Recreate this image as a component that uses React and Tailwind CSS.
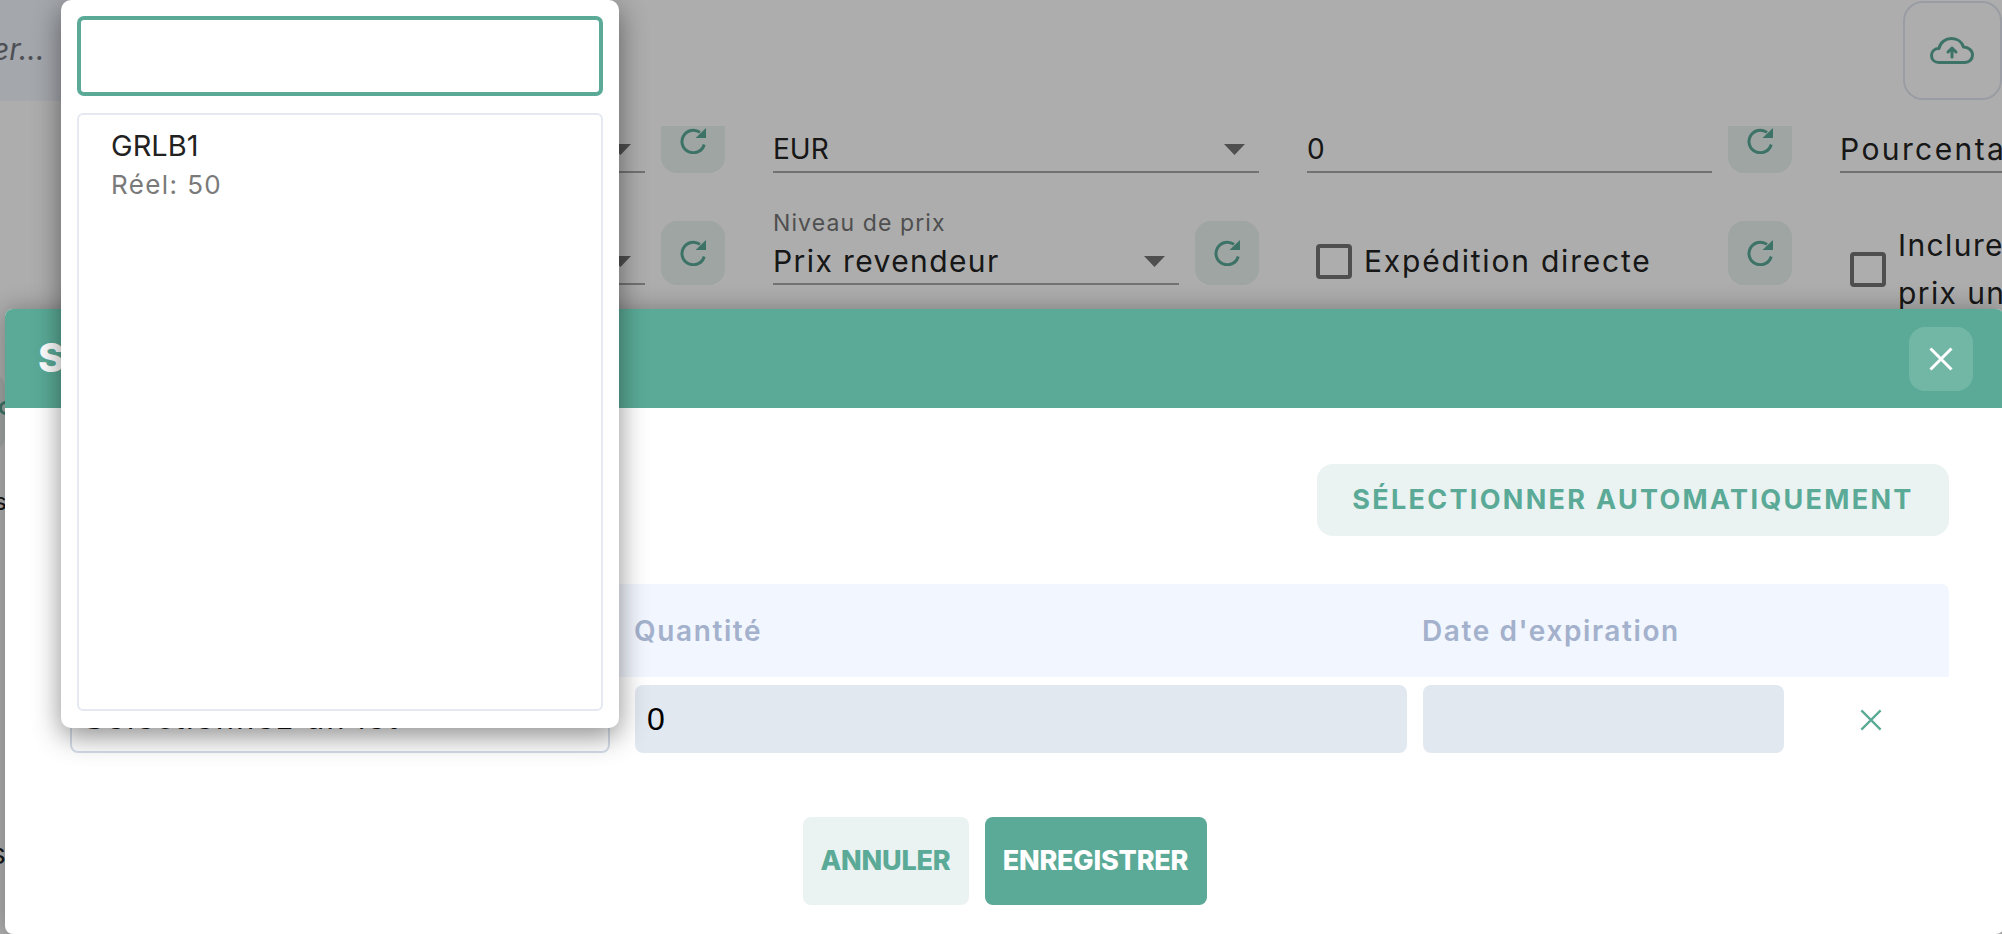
import React from "react";

const Refresh = () => (
  <button className="flex h-[64px] w-[64px] shrink-0 items-start justify-center rounded-2xl bg-[#eaf3f1] pt-[18px]">
    <svg width="27" height="27" viewBox="0 0 27 27" fill="none">
      <path d="M20 5.4A11.3 11.3 0 1 0 24.2 17.5" stroke="#5aaa97" strokeWidth="3" />
      <polygon points="26,1 26,11 15.5,11" fill="#5aaa97" />
    </svg>
  </button>
);

const Arrow = () => (
  <svg width="21" height="11" viewBox="0 0 21 11" className="shrink-0">
    <polygon points="0,0 21,0 10.5,11" fill="#757575" />
  </svg>
);

const Select = ({ text, width, textClass }) => (
  <div className={`flex h-[46px] shrink-0 items-center justify-between border-b-2 border-[#a8a8a8] pr-[14px] text-[#222] ${width}`}>
    <span className={`whitespace-nowrap ${textClass}`}>{text}</span>
    <Arrow />
  </div>
);

const Checkbox = () => (
  <span className="block h-[35px] w-[36px] shrink-0 rounded-[4px] border-[4px] border-[#757575]" />
);

const Close = ({ size, color, stroke }) => (
  <svg width={size} height={size} viewBox="0 0 24 24" fill="none">
    <path d="M1.5 1.5L22.5 22.5M22.5 1.5L1.5 22.5" stroke={color} strokeWidth={stroke} />
  </svg>
);

export default function App() {
  return (
    <div className="relative h-[934px] w-[2002px] overflow-hidden bg-white font-['Inter',sans-serif]">
      {/* page under the dialog */}
      <div className="flex h-[101px] items-start justify-between">
        <div className="flex h-[101px] w-[400px] items-center rounded-r-lg bg-[#f2f6fe] pb-[2px] text-[30px] text-[#74777f] italic">
          <span className="ml-[-8px]">er...</span>
        </div>
        <button className="mt-[1px] flex h-[99px] w-[99px] items-center justify-center rounded-[20px] border-2 border-[#e2e8f0] pr-[2px]">
          <svg width="44" height="27" viewBox="0 0 44 27" fill="none" stroke="#5aaa97" strokeWidth="3" strokeLinejoin="round" strokeLinecap="round">
            <path d="M9 25.5C4.5 25.5 1.5 22.5 1.5 18.5C1.5 14.5 4.5 11.5 9 11.5C10 5.5 15.5 1.5 21.5 1.5C27.5 1.5 32 5 33.5 10C38.5 10 42.5 13.5 42.5 18C42.5 22.5 39 25.5 35 25.5Z" />
            <path d="M22 20V11M18 15L22 11L26 15" />
          </svg>
        </button>
      </div>

      <div className="mt-[25px] flex h-[47px] items-end overflow-hidden">
        <div className="ml-[300px]"><Select text="" width="w-[345px]" textClass="" /></div>
        <div className="ml-4"><Refresh /></div>
        <div className="ml-[48px]"><Select text="EUR" width="w-[486px]" textClass="text-[28px]" /></div>
        <div className="ml-[48px] flex h-[46px] w-[405px] shrink-0 items-center border-b-2 border-[#a8a8a8] text-[28px] text-[#222]">0</div>
        <div className="ml-4"><Refresh /></div>
        <div className="ml-[48px]"><Select text="Pourcentage" width="w-[300px]" textClass="text-[30px] tracking-[2.4px]" /></div>
      </div>

      <div className="mt-[48px] flex h-[64px] items-end">
        <div className="ml-[300px]"><Select text="" width="w-[345px]" textClass="" /></div>
        <div className="ml-4"><Refresh /></div>
        <div className="ml-[48px] flex h-[64px] w-[406px] shrink-0 flex-col justify-end">
          <span className="mb-[6px] shrink-0 text-[23px] leading-[20px] tracking-[1.1px] text-[#757575]">Niveau de prix</span>
          <div className="shrink-0"><Select text="Prix revendeur" width="w-[406px]" textClass="text-[30px] tracking-[1.4px]" /></div>
        </div>
        <div className="ml-4"><Refresh /></div>
        <label className="ml-[57px] flex h-[46px] w-[396px] shrink-0 items-center gap-[12px] pb-[2px] text-[30px] tracking-[1.8px] text-[#222]">
          <Checkbox />
          Expédition directe
        </label>
        <div className="ml-4"><Refresh /></div>
        <label className="ml-[58px] flex h-[96px] shrink-0 items-center gap-[12px] self-start text-[30px] leading-[48px] tracking-[1.4px] text-[#222]">
          <Checkbox />
          <span className="w-[300px]">Inclure les<br />prix unitaires</span>
        </label>
      </div>

      {/* slivers of the page left of the dialog */}
      <div className="absolute top-[372px] left-0 h-[80px] w-[5px] overflow-hidden">
        <div className="relative left-[-59px]">
          <div className="flex h-[80px] w-[64px] items-center justify-end rounded-2xl bg-[#eaf3f1]">
            <span className="mr-[-8px] mb-[8px] h-[14px] w-[14px] rounded-full border-[3px] border-[#5aaa97]" />
          </div>
        </div>
      </div>
      <span className="absolute top-[490px] left-[-6px] text-[24px] leading-[24px] text-[#222]">s</span>
      <span className="absolute top-[840px] left-[-9px] text-[28px] leading-[28px] text-[#222]">s</span>

      {/* overlay */}
      <div className="absolute inset-0 bg-black/32" />

      {/* dialog */}
      <div className="absolute top-[309px] left-[5px] flex h-[625px] w-[1999px] flex-col rounded-lg bg-white shadow-[0_0_24px_rgba(0,0,0,0.3)]">
        <div className="flex h-[99px] shrink-0 items-center justify-between rounded-t-lg bg-[#5aaa97] pr-[31px] pl-[33px]">
          <span className="pb-[2px] text-[40px] font-extrabold text-white">Sélectionnez un lot</span>
          <button className="flex h-[64px] w-[64px] items-center justify-center rounded-2xl bg-white/15">
            <Close size={24} color="#ffffff" stroke={3} />
          </button>
        </div>

        <div className="flex justify-end pt-[56px] pr-[55px]">
          <button className="flex h-[72px] w-[632px] items-center justify-center rounded-2xl bg-[#eaf3f1] text-[27px] font-bold tracking-[2.3px] whitespace-nowrap text-[#5aaa97]">
            SÉLECTIONNER AUTOMATIQUEMENT
          </button>
        </div>

        <div className="mt-[48px] ml-[64px] w-[1880px]">
          <div className="flex h-[93px] items-center rounded-t-lg bg-[#f2f6fe] text-[28px] font-semibold tracking-[1.6px] text-[#a3b1cc]">
            <span className="ml-[24px] w-[541px]">Lot</span>
            <span className="w-[788px]">Quantité</span>
            <span>Date d'expiration</span>
          </div>
          <div className="mt-[8px] flex h-[68px] items-stretch">
            <div className="ml-px flex w-[540px] items-end rounded-lg border-2 border-[#d5dde9] pb-[17px] pl-[11px] font-['Liberation_Sans',sans-serif] text-[32px] leading-[32px] tracking-[2.4px] text-[#111]">
              Sélectionnez un lot
            </div>
            <div className="ml-[25px] flex w-[772px] items-center rounded-lg bg-[#e2e8f0] pl-[12px] font-['Liberation_Sans',sans-serif] text-[32px] text-black">0</div>
            <div className="ml-4 w-[361px] rounded-lg bg-[#e2e8f0]" />
            <div className="ml-[76px] flex items-center pt-[2px]">
              <Close size={22} color="#5aaa97" stroke={2.5} />
            </div>
          </div>
        </div>

        <div className="mt-[64px] flex justify-center gap-4">
          <button className="flex h-[88px] w-[166px] items-center justify-center rounded-lg bg-[#eaf3f1] pt-[1px] text-[27px] font-extrabold tracking-[-0.2px] text-[#5aaa97]">ANNULER</button>
          <button className="flex h-[88px] w-[222px] items-center justify-center rounded-lg bg-[#5aaa97] pt-[1px] text-[27px] font-extrabold tracking-[-0.2px] text-white">ENREGISTRER</button>
        </div>
      </div>

      {/* dropdown over the dialog */}
      <div className="absolute top-0 left-[61px] flex h-[728px] w-[558px] flex-col gap-[17px] rounded-[10px] bg-white px-4 pt-4 pb-[17px] shadow-[0_8px_28px_rgba(0,0,0,0.45)]">
        <input className="h-[80px] w-full shrink-0 rounded-[7px] border-[4px] border-[#5aaa97] bg-white px-3 text-[28px] outline-none" />
        <div className="flex-1 rounded-[6px] border-2 border-[#e4e9f2] pt-[13px] pl-[32px]">
          <div className="text-[29px] leading-[36px] text-[#222]">GRLB1</div>
          <div className="mt-[3px] text-[26px] leading-[36px] tracking-[1.4px] text-[#7a7a7a]">Réel: 50</div>
        </div>
      </div>
    </div>
  );
}
